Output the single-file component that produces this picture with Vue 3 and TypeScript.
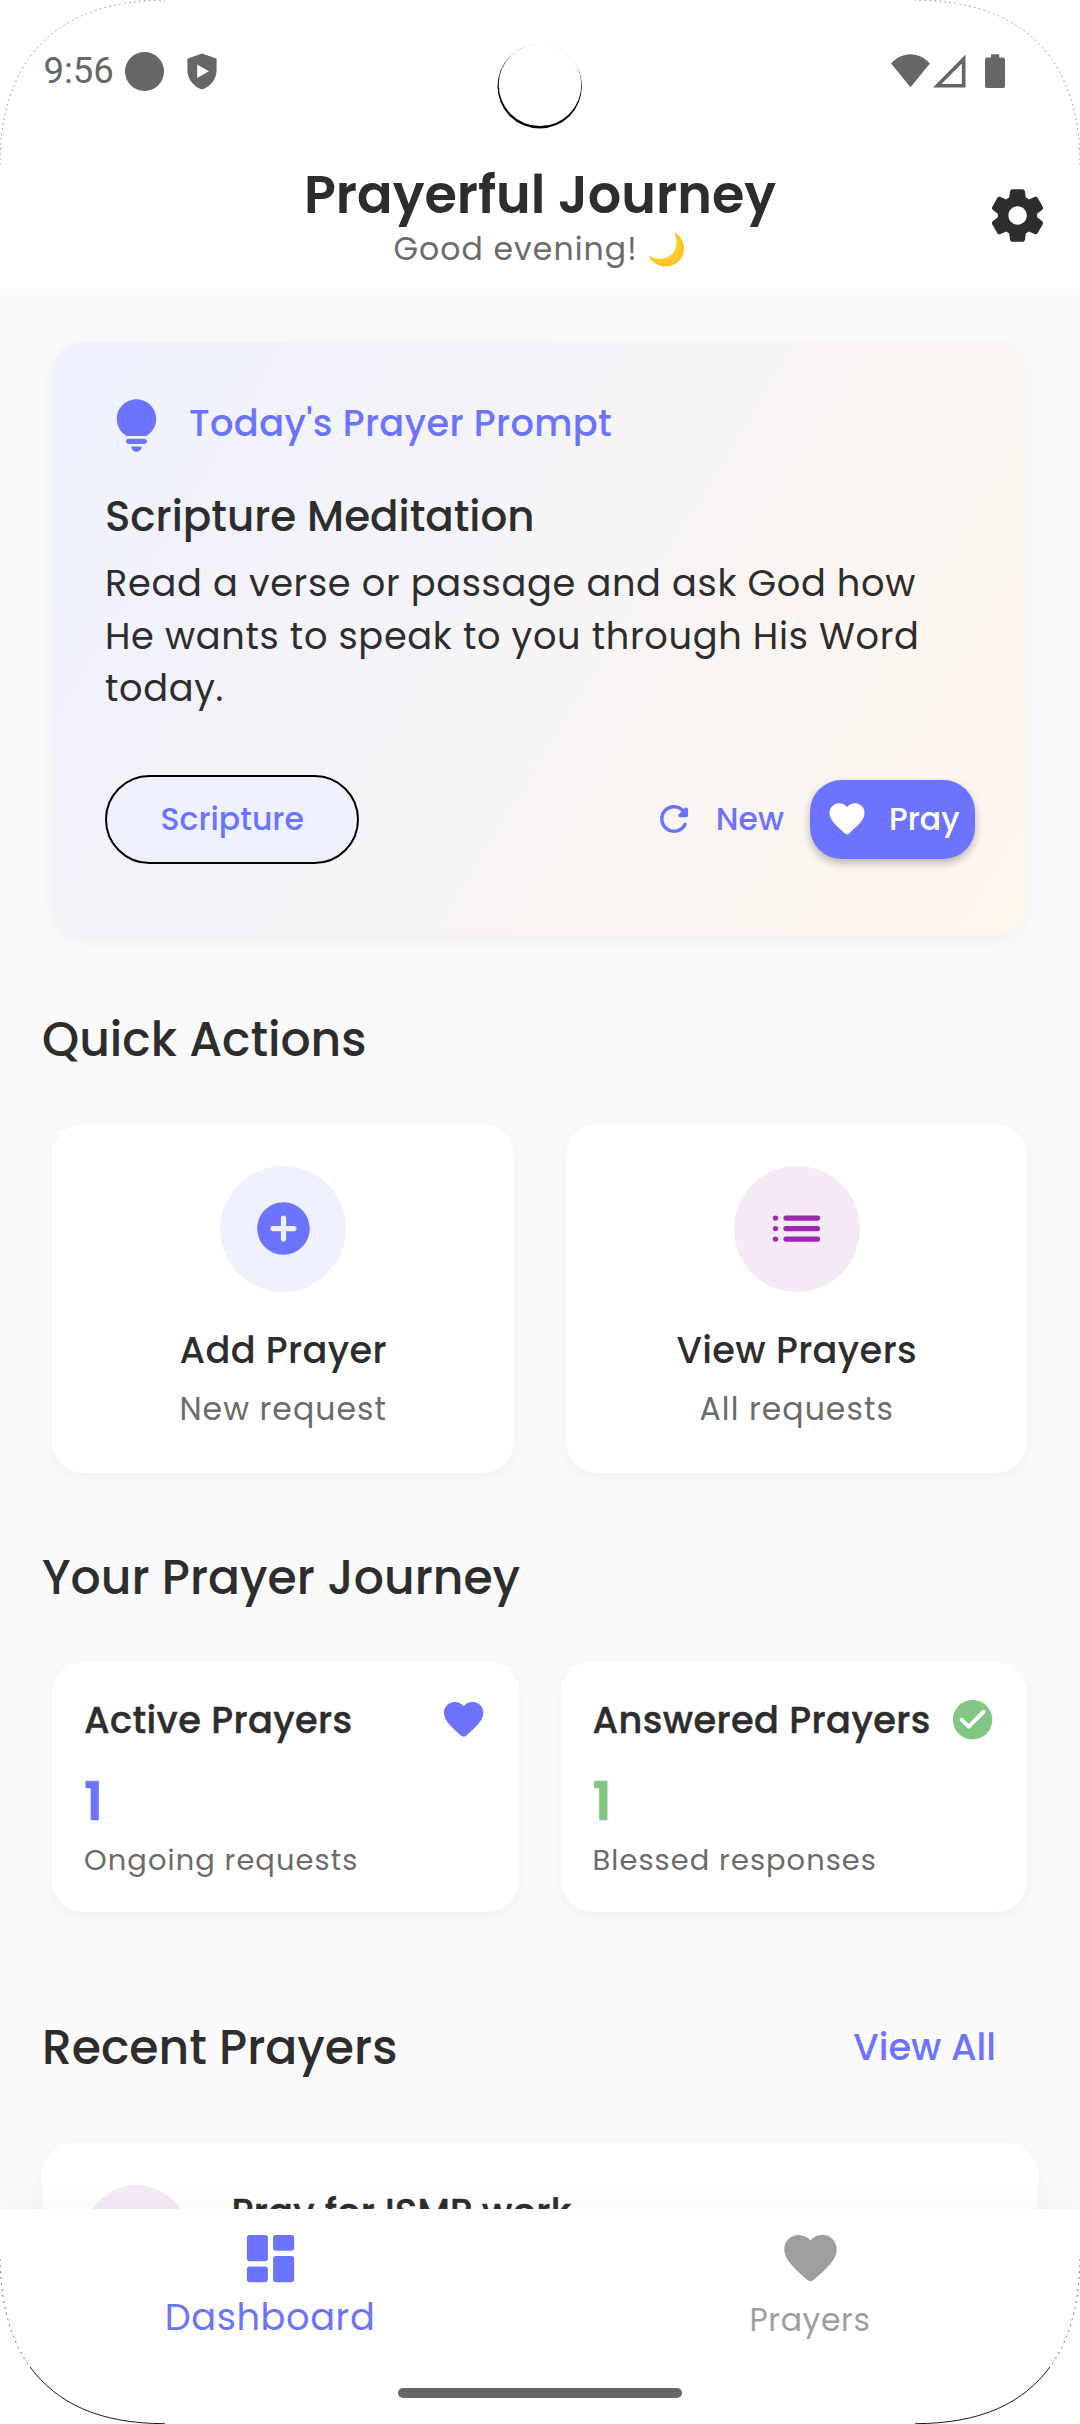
<script setup lang="ts">
interface QuickAction {
  title: string
  subtitle: string
  icon: 'add' | 'list'
}

interface Stat {
  title: string
  value: number
  caption: string
  icon: 'heart' | 'check'
}

interface Tab {
  label: string
  icon: 'dashboard' | 'heart'
  active: boolean
}

const actions: QuickAction[] = [
  { title: 'Add Prayer', subtitle: 'New request', icon: 'add' },
  { title: 'View Prayers', subtitle: 'All requests', icon: 'list' },
]

const stats: Stat[] = [
  { title: 'Active Prayers', value: 1, caption: 'Ongoing requests', icon: 'heart' },
  { title: 'Answered Prayers', value: 1, caption: 'Blessed responses', icon: 'check' },
]

const tabs: Tab[] = [
  { label: 'Dashboard', icon: 'dashboard', active: true },
  { label: 'Prayers', icon: 'heart', active: false },
]

const heart =
  'M13.35 20.13c-.76.69-1.93.69-2.69-.01l-.11-.1C5.3 15.27 1.87 12.16 2 8.28c.06-1.7.93-3.33 2.34-4.29 2.64-1.8 5.9-.96 7.66 1.1 1.76-2.06 5.02-2.91 7.66-1.1 1.41.96 2.28 2.59 2.34 4.29.14 3.88-3.3 6.99-8.55 11.76l-.1.09z'
</script>

<template>
  <div class="screen">
    <div class="status">
      <div class="status-side">
        <span class="clock">9:56</span>
        <svg class="dot" width="39" height="39" viewBox="0 0 39 39"><circle cx="19.5" cy="19.5" r="19.5" /></svg>
        <svg class="shield" width="30" height="37" viewBox="0 0 30 37">
          <path fill-rule="evenodd" d="M15 .4 29.2 5.600c.2 0 .4.400.4.800V17c0 9-5.800 16.300-14.600 19.600C6.200 33.300.4 26 .4 17V6.400c0-.4.2-.8.4-.8zM10.200 11.600v13.300L22 18.250z" />
        </svg>
      </div>
      <div class="status-side">
        <svg width="39" height="34" viewBox="0 0 39 34"><path d="M19.500 33.200.1 9.500C5 4 12 .3 19.500.3S34 4 38.900 9.500z" /></svg>
        <svg class="signal" width="33" height="34" viewBox="0 0 33 34"><path fill-rule="evenodd" d="M32.500.5v32.900H0zM28.800 9.600 8.400 30h20.400z" /></svg>
        <svg class="battery" width="20" height="34" viewBox="0 0 20 34"><path d="M6 .2h8.200v3.300H18a2 2 0 0 1 2 2V32a2 2 0 0 1-2 2H2a2 2 0 0 1-2-2V5.500a2 2 0 0 1 2-2h4z" /></svg>
      </div>
    </div>

    <header class="appbar">
      <div class="titles">
        <h1>Prayerful Journey</h1>
        <p>Good evening! 🌙</p>
      </div>
      <svg class="gear" width="63" height="63" viewBox="0 0 24 24">
        <path d="M19.500 12c0-.23-.01-.45-.03-.68l1.860-1.410c.4-.3.510-.860.260-1.300l-1.870-3.230c-.25-.44-.79-.62-1.250-.42l-2.150.91c-.37-.26-.76-.49-1.170-.68l-.29-2.310C14.800 2.380 14.370 2 13.870 2h-3.730c-.51 0-.94.380-1 .88l-.29 2.310c-.41.190-.8.420-1.170.68l-2.150-.91c-.46-.2-1-.02-1.250.42L2.410 8.620c-.25.440-.14.990.26 1.300l1.860 1.410C4.510 11.550 4.500 11.770 4.500 12s.01.450.03.680l-1.860 1.410c-.4.3-.51.860-.26 1.300l1.870 3.230c.25.440.79.620 1.250.42l2.150-.91c.37.260.76.490 1.170.68l.29 2.310c.06.5.490.88 1 .88h3.730c.5 0 .93-.38.990-.88l.29-2.310c.41-.19.8-.42 1.170-.68l2.150.91c.46.2 1 .02 1.250-.42l1.870-3.230c.25-.44.140-.99-.26-1.300l-1.860-1.410c.03-.23.04-.45.04-.68zm-7.460 3.500c-1.930 0-3.500-1.570-3.500-3.500s1.570-3.500 3.500-3.500 3.500 1.570 3.500 3.500-1.570 3.500-3.500 3.500z" />
      </svg>
    </header>

    <main class="content">
      <section class="prompt">
        <div class="prompt-head">
          <svg width="63" height="63" viewBox="0 0 24 24">
            <path d="M12 22c1.100 0 2-.9 2-2h-4c0 1.100.9 2 2 2zM9 19h6c.55 0 1-.45 1-1s-.45-1-1-1H9c-.55 0-1 .45-1 1s.45 1 1 1zM12 2C7.860 2 4.500 5.360 4.500 9.500c0 3.820 2.660 5.860 3.770 6.500h7.460c1.110-.64 3.770-2.680 3.770-6.500C19.500 5.360 16.140 2 12 2z" />
          </svg>
          <span>Today's Prayer Prompt</span>
        </div>
        <h2>Scripture Meditation</h2>
        <p class="prompt-text">Read a verse or passage and ask God how He wants to speak to you through His Word today.</p>
        <div class="prompt-foot">
          <span class="chip">Scripture</span>
          <div class="buttons">
            <button class="new">
              <svg width="42" height="42" viewBox="0 0 24 24">
                <path d="M17.650 6.350c-1.630-1.630-3.940-2.570-6.480-2.310-3.670.370-6.690 3.350-7.100 7.020C3.520 15.910 7.270 20 12 20c3.190 0 5.930-1.870 7.210-4.560.320-.67-.16-1.440-.9-1.440-.37 0-.72.2-.88.530-1.130 2.430-3.840 3.970-6.800 3.310-2.220-.49-4.010-2.300-4.480-4.520C5.310 9.440 8.260 6 12 6c1.660 0 3.140.690 4.220 1.780l-1.510 1.510c-.63.630-.19 1.710.7 1.710H19c.55 0 1-.45 1-1V6.410c0-.89-1.080-1.340-1.710-.71l-.64.650z" />
              </svg>
              <span>New</span>
            </button>
            <button class="pray">
              <svg width="42" height="42" viewBox="0 0 24 24"><path :d="heart" /></svg>
              <span>Pray</span>
            </button>
          </div>
        </div>
      </section>

      <h2 class="section quick">Quick Actions</h2>
      <div class="actions">
        <article v-for="a in actions" :key="a.title" class="card action">
          <div class="bubble" :class="a.icon">
            <svg v-if="a.icon === 'add'" width="63" height="63" viewBox="0 0 24 24">
              <path d="M12 2C6.480 2 2 6.480 2 12s4.480 10 10 10 10-4.480 10-10S17.520 2 12 2zm4 11h-3v3c0 .55-.45 1-1 1s-1-.45-1-1v-3H8c-.55 0-1-.45-1-1s.45-1 1-1h3V8c0-.55.450-1 1-1s1 .450 1 1v3h3c.55 0 1 .45 1 1s-.45 1-1 1z" />
            </svg>
            <svg v-else width="63" height="63" viewBox="0 0 24 24">
              <g v-for="y in [7, 11, 15]" :key="y">
                <circle cx="4" :cy="y + 1" r="1" />
                <rect x="7" :y="y" width="14" height="2" rx="1" />
              </g>
            </svg>
          </div>
          <h3>{{ a.title }}</h3>
          <p>{{ a.subtitle }}</p>
        </article>
      </div>

      <h2 class="section journey">Your Prayer Journey</h2>
      <div class="stats">
        <article v-for="s in stats" :key="s.title" class="card stat" :class="s.icon">
          <div class="stat-head">
            <h3>{{ s.title }}</h3>
            <svg width="47.25" height="47.25" viewBox="0 0 24 24">
              <path v-if="s.icon === 'heart'" :d="heart" />
              <path v-else d="M12 2C6.480 2 2 6.480 2 12s4.480 10 10 10 10-4.480 10-10S17.520 2 12 2zM9.290 16.290 5.700 12.700c-.39-.39-.39-1.020 0-1.410.39-.39 1.020-.39 1.410 0L10 14.170l6.880-6.880c.39-.39 1.020-.39 1.410 0 .39.390.39 1.020 0 1.410l-7.590 7.590c-.38.390-1.020.390-1.410 0z" />
            </svg>
          </div>
          <strong>{{ s.value }}</strong>
          <p>{{ s.caption }}</p>
        </article>
      </div>

      <div class="recent-head">
        <h2 class="section">Recent Prayers</h2>
        <a>View All</a>
      </div>
      <article class="card recent">
        <div class="avatar"></div>
        <h3>Pray for ISMP work</h3>
      </article>
    </main>

    <nav class="tabs">
      <div class="tab-row">
        <div v-for="t in tabs" :key="t.label" class="tab" :class="{ active: t.active }">
          <svg width="63" height="63" viewBox="0 0 24 24">
            <g v-if="t.icon === 'dashboard'">
              <rect x="3" y="3" width="8" height="10" rx="1" />
              <rect x="13" y="3" width="8" height="6" rx="1" />
              <rect x="3" y="15" width="8" height="6" rx="1" />
              <rect x="13" y="11" width="8" height="10" rx="1" />
            </g>
            <path v-else :d="heart" />
          </svg>
          <span>{{ t.label }}</span>
        </div>
      </div>
      <div class="home"></div>
    </nav>

    <!-- rounded display corners and the camera cutout lie over everything -->
    <svg class="bezel" width="1080" height="2424" viewBox="0 0 1080 2424">
      <g fill="none" stroke="#000">
        <g stroke-width=".5" stroke-dasharray="2 3" stroke-opacity=".7">
          <path d="M0 165C0 58 58 0 165 .3" />
          <path d="M1080 165C1080 58 1022 0 915 .3" />
        </g>
        <g stroke-width=".9">
          <path stroke-dasharray="2 4" stroke-opacity=".6" d="M0 2259C1 2312 14 2345 30 2367" />
          <path stroke-dasharray="2 4" stroke-opacity=".6" d="M1080 2259C1079 2312 1066 2345 1050 2367" />
          <path d="M30 2367C57 2403 98 2423.500 165 2423.700" />
          <path d="M1050 2367C1023 2403 982 2423.500 915 2423.700" />
        </g>
      </g>
      <circle cx="539.700" cy="86.300" r="42.200" />
      <circle cx="540" cy="84.800" r="41.300" fill="#fff" />
    </svg>
  </div>
</template>

<style>
body {
  margin: 0;
  background: #fff;
}
</style>

<style scoped>
.screen {
  position: relative;
  display: flex;
  flex-direction: column;
  width: 1080px;
  height: 2424px;
  overflow: hidden;
  background: #fff;
  color: #2d2d2d;
  font-family: Poppins, Inter, "Noto Color Emoji", sans-serif;
  font-size: 36.75px;
}
h1, h2, h3, p { margin: 0; font-weight: 500; }
svg { display: block; flex: none; fill: currentColor; }
button { border: 0; background: none; font: inherit; padding: 0; }

.status {
  display: flex;
  justify-content: space-between;
  box-sizing: border-box;
  height: 142px;
  padding: 0 75px 0 43.500px;
  color: #666;
}
.status-side { display: flex; align-items: center; height: 142px; }
.clock {
  width: 81px;
  white-space: nowrap;
  font-family: Roboto, sans-serif;
  font-size: 36.500px;
  line-height: 42px;
}
.dot { margin-right: 23px; }
.signal { margin-left: 3.500px; }
.battery { margin-left: 19px; }

.appbar {
  display: grid;
  grid-template-columns: 1fr auto 1fr;
  align-items: center;
  height: 147px;
}
.titles { grid-column: 2; text-align: center; padding-top: 8px; }
.titles h1 { font-size: 52.500px; font-weight: 600; line-height: 60px; }
.titles p { padding-left: 1px; font-size: 31.500px; font-weight: 400; line-height: 49px; letter-spacing: 1.100px; color: #6b6b6b; }
.gear { justify-self: end; margin-right: 31.500px; }

.content {
  flex: 1;
  min-height: 0;
  overflow: hidden;
  background: #fafafa;
}
.prompt {
  box-sizing: border-box;
  width: 975px;
  height: 593px;
  margin: 53px 53px 0 52px;
  padding: 52px 52px 52px 53px;
  border-radius: 31.500px;
  background: linear-gradient(121.300deg, #eef1ff, #fff7ec);
  box-shadow: 0 5px 16px rgba(0, 0, 0, .045);
}
.prompt-head {
  display: flex;
  gap: 21px;
  color: #6c74ff;
  font-weight: 500;
  letter-spacing: .35px;
  line-height: 59px;
}
.prompt h2 { margin-top: 30px; font-size: 42px; line-height: 60px; }
.prompt-text { margin-top: 10px; font-weight: 400; line-height: 52.500px; letter-spacing: .66px; }
.prompt-foot {
  display: flex;
  align-items: center;
  justify-content: space-between;
  margin-top: 60px;
  color: #6c74ff;
  font-size: 31.500px;
  font-weight: 500;
}
.chip {
  box-sizing: border-box;
  height: 89px;
  padding: 0 53px 0 53.500px;
  border: 2px solid #000;
  border-radius: 45px;
  background: #eff1ff;
  line-height: 85px;
}
.buttons, .new, .pray { display: flex; align-items: center; }
.new, .pray { gap: 21px; color: #6c74ff; }
.pray {
  box-sizing: border-box;
  width: 165px;
  height: 79px;
  margin-left: 26px;
  padding-left: 16px;
  border-radius: 31.500px;
  background: #6c74ff;
  color: #fff;
  box-shadow: 0 4px 8px rgba(0, 0, 0, .27);
}

.section { font-size: 47.250px; line-height: 60px; }
.quick { margin: 74.500px 42px 0; }
.journey { margin: 75px 42px 0; }
.card { background: #fff; border-radius: 31.500px; box-shadow: 0 5px 16px rgba(0, 0, 0, .038); }

.actions { display: flex; gap: 52px; margin: 54px 53px 0 52px; }
.action {
  display: flex;
  flex: 1;
  flex-direction: column;
  align-items: center;
  box-sizing: border-box;
  height: 349px;
  padding: 42px 0 0 1px;
}
.bubble {
  display: flex;
  align-items: center;
  justify-content: center;
  width: 126px;
  height: 126px;
  border-radius: 50%;
  background: #eff1ff;
  color: #6c74ff;
}
.bubble.list { background: #f5e9f7; color: #9c27b0; }
.action h3 { margin-top: 30px; font-size: 36.750px; line-height: 56px; letter-spacing: .35px; }
.action p { margin-top: 9px; font-size: 31.500px; font-weight: 400; line-height: 44px; letter-spacing: 1.050px; color: #6b6b6b; }

.stats { display: flex; gap: 42px; margin: 54.500px 53px 0 52px; }
.stat { flex: 1; box-sizing: border-box; height: 250px; padding: 32px 31px 0 32px; }
.stat-head { display: flex; align-items: center; justify-content: space-between; height: 52px; }
.stat h3 { font-size: 36.750px; line-height: 52px; letter-spacing: .39px; white-space: nowrap; -webkit-text-stroke: .4px currentColor; }
.stat strong { display: block; margin-top: 26px; font-size: 52.500px; font-weight: 600; line-height: 60px; -webkit-text-stroke: .6px currentColor; }
.stat p { margin-top: 8px; font-size: 28.875px; font-weight: 400; line-height: 40px; letter-spacing: 1.080px; color: #6b6b6b; }
.stat.heart svg, .stat.heart strong { color: #6c74ff; }
.stat.check svg, .stat.check strong { color: #81c784; }

.recent-head { display: flex; justify-content: space-between; margin: 105.500px 84px 0 42px; }
.recent-head a { color: #6c74ff; font-weight: 500; line-height: 59px; }
.recent {
  display: flex;
  gap: 42.500px;
  box-sizing: border-box;
  height: 240px;
  margin: 65px 42px 0;
  padding: 42px;
}
.avatar { width: 105px; height: 105px; border-radius: 50%; background: #f5e9f7; }
.recent h3 { font-size: 36.750px; line-height: 55px; letter-spacing: .26px; -webkit-text-stroke: .4px currentColor; }

.tabs {
  position: relative;
  display: flex;
  flex-direction: column;
  align-items: center;
  height: 215px;
  background: #fff;
  box-shadow: 0 -5px 26px rgba(0, 0, 0, .03);
}
.tab-row { display: flex; width: 100%; height: 179px; }
.tab {
  display: flex;
  flex: 1;
  flex-direction: column;
  align-items: center;
  padding-top: 18px;
  color: #9e9e9e;
  font-size: 31.500px;
  line-height: 60px;
  letter-spacing: .6px;
}
.tab.active { color: #6c74ff; font-size: 36.750px; line-height: 55px; }
.home { width: 284px; height: 10px; border-radius: 5px; background: #666; }

.bezel { position: absolute; inset: 0; fill: #000; pointer-events: none; }
</style>
